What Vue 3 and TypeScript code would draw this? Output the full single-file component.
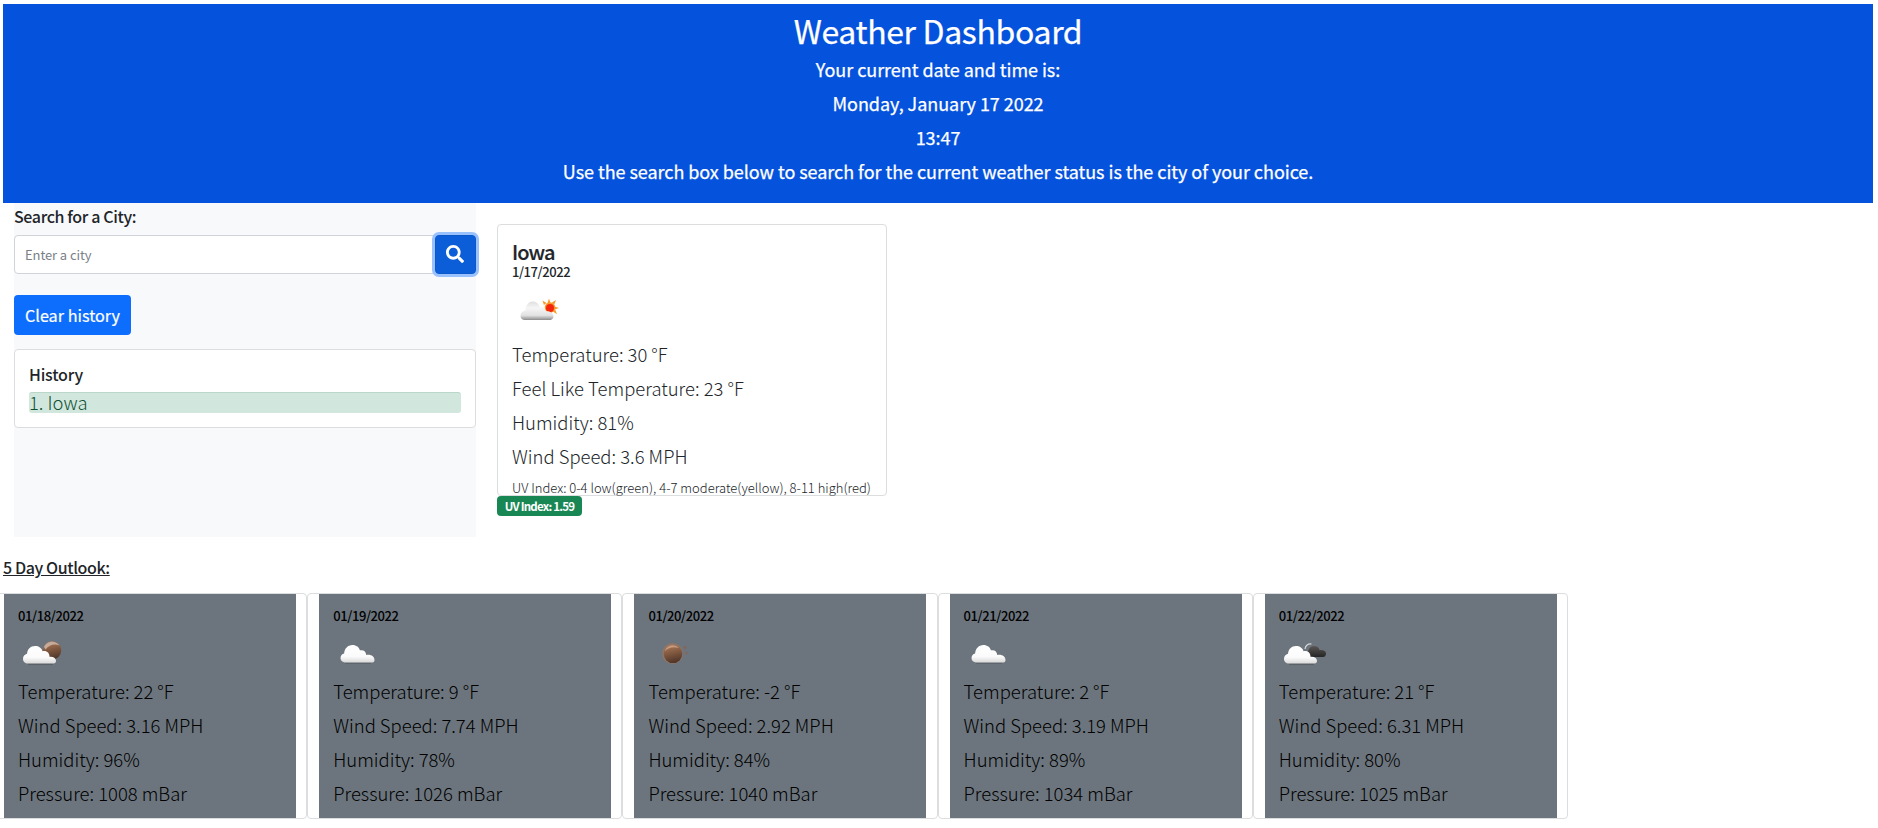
<script setup lang="ts">
type IconKind = 'day' | 'moon-cloud' | 'cloud' | 'moon' | 'broken'

interface Forecast {
  date: string
  icon: IconKind
  temp: string
  wind: string
  humidity: number
  pressure: number
}

const forecast: Forecast[] = [
  { date: '01/18/2022', icon: 'moon-cloud', temp: '22', wind: '3.16', humidity: 96, pressure: 1008 },
  { date: '01/19/2022', icon: 'cloud', temp: '9', wind: '7.74', humidity: 78, pressure: 1026 },
  { date: '01/20/2022', icon: 'moon', temp: '-2', wind: '2.92', humidity: 84, pressure: 1040 },
  { date: '01/21/2022', icon: 'cloud', temp: '2', wind: '3.19', humidity: 89, pressure: 1034 },
  { date: '01/22/2022', icon: 'broken', temp: '21', wind: '6.31', humidity: 80, pressure: 1025 },
]
const history: string[] = ['Iowa']
</script>

<template>
  <div class="page">
    <svg class="defs" width="0" height="0" aria-hidden="true">
      <defs>
        <linearGradient id="white-cloud" x1="0" y1="0" x2="0" y2="1">
          <stop offset="0" stop-color="#fff" />
          <stop offset=".65" stop-color="#fbfbfb" />
          <stop offset="1" stop-color="#d9d9d9" />
        </linearGradient>
        <linearGradient id="day-cloud" x1="0" y1="0" x2="0" y2="1">
          <stop offset="0" stop-color="#dedede" />
          <stop offset=".35" stop-color="#f6f6f6" />
          <stop offset=".75" stop-color="#e2e2e2" />
          <stop offset="1" stop-color="#8c8c8c" />
        </linearGradient>
        <linearGradient id="brown-moon" x1="0" y1="0" x2=".25" y2="1">
          <stop offset="0" stop-color="#b98d72" />
          <stop offset=".3" stop-color="#97694b" />
          <stop offset="1" stop-color="#54382a" />
        </linearGradient>
        <linearGradient id="dark-cloud" x1="0" y1="0" x2="0" y2="1">
          <stop offset="0" stop-color="#5a5654" />
          <stop offset="1" stop-color="#252525" />
        </linearGradient>
      </defs>
    </svg>

    <header class="banner">
      <h1>Weather Dashboard</h1>
      <p>Your current date and time is:</p>
      <p>Monday, January 17 2022</p>
      <p>13:47</p>
      <p>Use the search box below to search for the current weather status is the city of your choice.</p>
    </header>

    <main class="content">
      <aside class="sidebar">
        <label class="search-label" for="city">Search for a City:</label>
        <div class="search-row">
          <input id="city" type="text" placeholder="Enter a city" />
          <button class="search-button" type="button" aria-label="Search">
            <svg viewBox="0 0 512 512" width="18" height="18"><path fill="#fff" d="M505 442.700 405.300 343c-4.500-4.500-10.600-7-17-7H372c27.600-35.300 44-79.700 44-128C416 93.100 322.900 0 208 0S0 93.100 0 208s93.100 208 208 208c48.300 0 92.700-16.400 128-44v16.300c0 6.400 2.500 12.500 7 17l99.700 99.700c9.400 9.400 24.600 9.400 33.900 0l28.300-28.300c9.400-9.400 9.400-24.600.1-34zM208 336c-70.700 0-128-57.200-128-128 0-70.700 57.200-128 128-128 70.700 0 128 57.200 128 128 0 70.700-57.200 128-128 128z" /></svg>
          </button>
        </div>
        <button class="clear-button" type="button">Clear history</button>
        <section class="history">
          <h2>History</h2>
          <ul>
            <li v-for="(city, i) in history" :key="city">{{ i + 1 }}. {{ city }}</li>
          </ul>
        </section>
      </aside>

      <div class="current-wrap">
        <section class="current">
          <h3>Iowa</h3>
          <h4>1/17/2022</h4>
          <svg class="current-icon" width="50" height="50" viewBox="0 0 50 50">
            <g fill="#f79a2c">
              <path d="M37 12.500 38.500 17h-3zM30.500 14.500l4 2.500-2.600 2zM44 14l-1.700 4.400-2.400-2zM47 22l-4.500 1.400v-3zM45 28.200l-4-2.600 2.200-2z" />
              <circle cx="38" cy="21.500" r="5.300" />
            </g>
            <circle cx="38" cy="22" r="4" fill="#f4260e" />
            <path fill="url(#day-cloud)" d="M13 34c-3 0-4.500-2-4.500-4.300 0-2.700 2-4.700 4.600-4.900 1-5.900 3.500-9.300 7.500-9.300 3.800 0 6.500 2.500 7.300 6 3-1 5.400.6 6 4 3-.7 6 .7 7.300 3.500.9 2.500-.8 5-3.200 5z" />
          </svg>
          <p>Temperature: 30 °F</p>
          <p>Feel Like Temperature: 23 °F</p>
          <p>Humidity: 81%</p>
          <p>Wind Speed: 3.6 MPH</p>
          <p class="uv-note">UV Index: 0-4 low(green), 4-7 moderate(yellow), 8-11 high(red)</p>
        </section>
        <span class="uv-badge">UV Index: 1.59</span>
      </div>
    </main>

    <h2 class="outlook-title">5 Day Outlook:</h2>
    <section class="outlook">
      <article v-for="day in forecast" :key="day.date" class="forecast-card">
        <div class="forecast-body">
          <h5>{{ day.date }}</h5>
          <svg class="forecast-icon" width="50" height="50" viewBox="0 0 50 50">
            <template v-if="day.icon === 'moon-cloud'">
              <circle cx="34" cy="21.500" r="9.200" fill="url(#brown-moon)" />
              <path d="M26 18c2-5.500 11-8 15.500-1.500-5-2-10-1-14 4z" fill="#c6aa9a" />
            </template>
            <template v-if="day.icon === 'broken'">
              <path d="M31 28c-4-5-1-11 4-11 3 0 5 1.500 5.500 4 4-.5 6.500 1 6.500 3.500S45.500 28 44 28z" fill="url(#dark-cloud)" />
              <path d="M26 20c.5-3.500 3-5.600 6.500-5" fill="none" stroke="#d7d7d7" stroke-width="1.200" />
            </template>
            <template v-if="day.icon === 'moon'">
              <circle cx="24.500" cy="24.500" r="10.500" fill="#8c7569" />
              <circle cx="25" cy="24.800" r="9.300" fill="url(#brown-moon)" />
              <path d="M17 22c1-5 9-8 14-3-6-1.500-10-.8-14 3z" fill="#c99c80" />
              <circle cx="37" cy="18.500" r="1.500" fill="#84675a" />
              <circle cx="38.500" cy="24" r="1.300" fill="#84675a" />
            </template>
            <g v-else-if="day.icon === 'cloud'">
              <path d="M12 34.200h26" stroke="#555a5f" stroke-width="1.400" opacity=".6" />
              <path fill="url(#white-cloud)" transform="translate(1 0)" d="M11 33.500c-2.800 0-4.500-2-4.500-4.400 0-2.300 1.600-4.100 3.600-4.600.4-5 3.800-8.500 8.300-8.500 4 0 6.800 2.300 7.500 5.300 3.700-.8 6.300 1.300 6.300 4.700 5-.8 8.300 1.700 8.300 5 0 1.500-.7 2.500-2 2.500z" />
            </g>
            <g v-else>
              <path d="M10 35.200h25" stroke="#50555a" stroke-width="1.800" opacity=".6" />
              <path fill="url(#white-cloud)" d="M10 34.500c-3 0-5-2-5-4.600 0-2.500 1.700-4.500 4-5.100.3-4.600 3.500-7.800 8-7.800 3.800 0 6.700 2 7.500 5.200 3.900-1 7.200 1.500 7 5.600 4-.4 6.500 1.400 6.500 4.200 0 1.500-.9 2.500-2.300 2.500z" />
            </g>
          </svg>
          <p>Temperature: {{ day.temp }} °F</p>
          <p>Wind Speed: {{ day.wind }} MPH</p>
          <p>Humidity: {{ day.humidity }}%</p>
          <p>Pressure: {{ day.pressure }} mBar</p>
        </div>
      </article>
    </section>
  </div>
</template>

<style>
html,
body {
  background: #fff;
  overflow: hidden;
}
</style>

<style scoped>
* {
  box-sizing: border-box;
}
.page {
  width: 1878px;
  height: 828px;
  padding: 4px 5px 0 3px;
  overflow: hidden;
  color: #212529;
  font-family: 'Noto Sans CJK SC', 'Noto Sans', sans-serif;
  font-size: 18.450px;
  font-weight: 300;
}
.defs {
  display: block;
}
h1, h2, h3, h4, h5, p, ul {
  margin: 0;
  padding: 0;
}
button, input {
  font-family: inherit;
}
.banner {
  height: 199px;
  padding-top: 5px;
  background: #0552dd;
  color: #fff;
  text-align: center;
}
h1 {
  height: 43px;
  font-size: 32px;
  font-weight: 400;
  line-height: 42px;
  letter-spacing: -0.35px;
  -webkit-text-stroke: 0.25px #fff;
}
.banner p {
  height: 34px;
  font-size: 18px;
  font-weight: 400;
  line-height: 34px;
  letter-spacing: -0.05px;
  -webkit-text-stroke: 0.25px #fff;
}
.content {
  display: flex;
  height: 334px;
  padding-left: 11px;
}
.sidebar {
  width: 462px;
  background: #f8f9fb;
}
.search-label {
  display: block;
  height: 32px;
  font-size: 16px;
  font-weight: 500;
  line-height: 27px;
  letter-spacing: -0.37px;
}
.search-row {
  display: flex;
  height: 39px;
}
input {
  width: 421px;
  height: 39px;
  padding: 0 10px 1px;
  border: 1px solid #ced4da;
  border-radius: 4px 0 0 4px;
  font-size: 13px;
  font-weight: 400;
  letter-spacing: -0.1px;
}
input::placeholder {
  color: #7a8087;
  opacity: 1;
}
.search-button {
  display: flex;
  align-items: center;
  justify-content: center;
  width: 41px;
  height: 39px;
  padding: 0 1px 1px 0;
  border: 1px solid #0a58ca;
  border-radius: 4px;
  background: #0b5ed7;
  box-shadow: 0 0 0 3px #98c1fe;
}
.clear-button {
  display: block;
  width: 117px;
  height: 40px;
  margin-top: 21px;
  padding: 0;
  border: 0;
  border-radius: 4px;
  background: #0d6efd;
  color: #fff;
  font-size: 16.200px;
  font-weight: 400;
  line-height: 39px;
  -webkit-text-stroke: 0.2px #fff;
}
.history {
  height: 79px;
  margin-top: 14px;
  padding: 14px 14px 0;
  border: 1px solid #dcdddf;
  border-radius: 4px;
  background: #fff;
}
.history h2 {
  height: 28px;
  font-size: 16px;
  font-weight: 500;
  line-height: 21px;
  letter-spacing: -0.2px;
}
.history ul {
  list-style: none;
}
.history li {
  height: 21px;
  border-top: 1px solid #b9d6c8;
  border-radius: 3px;
  background: #d1e7dd;
  color: #0f5132;
  line-height: 19px;
}
.current-wrap {
  display: flex;
  flex-direction: column;
  align-items: flex-start;
  width: 390px;
  margin-left: 21px;
  padding-top: 21px;
}
.current {
  width: 390px;
  height: 272px;
  padding: 15px 0 0 14px;
  border: 1px solid #dcdddf;
  border-radius: 4px;
  white-space: nowrap;
}
.current h3 {
  height: 24px;
  font-size: 20px;
  font-weight: 500;
  line-height: 23px;
  letter-spacing: -0.9px;
  -webkit-text-stroke: 0.2px #212529;
}
.current h4 {
  height: 18px;
  font-size: 13px;
  font-weight: 500;
  line-height: 16px;
  letter-spacing: -0.43px;
}
.current-icon {
  display: block;
  height: 50px;
  margin: 4px 0 1px;
}
.current p {
  height: 34px;
  line-height: 34px;
}
.current .uv-note {
  height: 30px;
  font-size: 13px;
  line-height: 30px;
}
.uv-badge {
  width: 85px;
  height: 20px;
  border-radius: 4px;
  background: #198754;
  color: #fff;
  font-size: 11.500px;
  font-weight: 700;
  line-height: 20px;
  letter-spacing: -0.750px;
  text-align: center;
}
.outlook-title {
  height: 56px;
  padding-top: 19px;
  font-size: 16px;
  font-weight: 500;
  line-height: 23px;
  letter-spacing: -0.4px;
  text-decoration: underline;
}
.outlook {
  display: grid;
  grid-template-columns: repeat(5, 315.2px);
  margin-left: -11px;
}
.forecast-card {
  height: 226px;
  padding-left: 11px;
  border: 1px solid #dcdddf;
  border-radius: 4px;
}
.forecast-body {
  width: 292px;
  height: 224px;
  padding: 12px 0 0 14px;
  background: #6c757d;
  color: #000;
}
h5 {
  height: 22px;
  font-size: 13px;
  font-weight: 500;
  line-height: 20px;
  letter-spacing: -0.4px;
}
.forecast-icon {
  display: block;
  margin: 1px 0 -5px;
}
.forecast-body p {
  height: 34px;
  line-height: 34px;
}
</style>
